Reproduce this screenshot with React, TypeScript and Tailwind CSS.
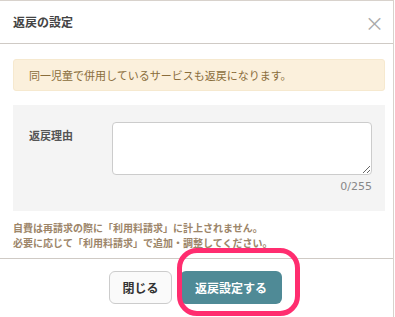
export default function App() {
  return (
    <div className="relative h-[317px] w-[395px] overflow-hidden bg-white font-['Noto_Sans_CJK_JP',sans-serif]">
      <div className="h-[317px] w-[394px] border-t border-r border-[#d8d2cc]">
        {/* Header */}
        <div className="flex h-[43px] items-center justify-between border-b border-[#cfcac5] pl-[13px] pr-[9px]">
          <h1 className="text-[12px] font-bold text-[#444]">返戻の設定</h1>
          <button className="text-[19px] leading-none text-[#aaa]">×</button>
        </div>

        {/* Body */}
        <div className="pl-[13px] pr-[8px] pt-[15px]">
          <div className="flex h-[32px] items-center rounded-[3px] border border-[#f6e9cf] bg-[#fbf0dc] px-[15px] text-[11px] text-[#8a6d3b]">
            同一児童で併用しているサービスも返戻になります。
          </div>

          <div className="mt-[14px] bg-[#f4f4f4] pt-[17px] pb-[17px] pl-[16px] pr-[13px]">
            <div className="flex">
              <label className="w-[83px] pt-[5px] text-[11px] font-bold text-[#555]">返戻理由</label>
              <textarea className="h-[53px] flex-1 resize-y rounded-[4px] border border-[#ccc] bg-white" />
            </div>
            <p className="mt-[5px] text-right text-[11px] leading-[14px] text-[#888] font-['DejaVu_Sans',sans-serif]">0/255</p>
          </div>

          <div className="mt-[10px] text-[10px] font-bold text-[#9c8569]">
            <p className="leading-[14.5px]">自費は再請求の際に「利用料請求」に計上されません。</p>
            <p className="leading-[14.5px]">必要に応じて「利用料請求」で追加・調整してください。</p>
          </div>
        </div>

        {/* Footer */}
        <div className="mt-[8px] flex justify-center gap-[8px] border-t border-[#cfcac5] pt-[12px] pr-[2px]">
          <button className="h-[33px] w-[63px] rounded-[6px] border border-[#ccc] bg-[#fafafa] text-[12px] font-bold text-[#333]">
            閉じる
          </button>
          <button className="h-[33px] w-[102px] rounded-[6px] bg-[#4f8a96] text-[12px] font-bold text-white">
            返戻設定する
          </button>
        </div>
      </div>

      {/* highlight annotation */}
      <div className="absolute left-[177px] top-[248px] h-[68px] w-[123px] rounded-[20px] border-[5px] border-[#ff2d6f]" />
    </div>
  )
}
